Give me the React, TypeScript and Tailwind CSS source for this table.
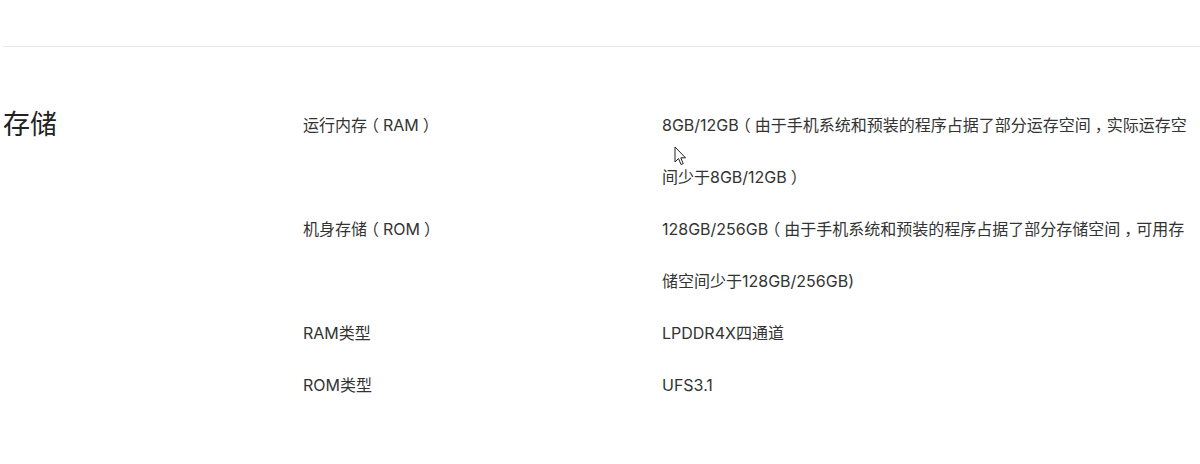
import React from 'react';

const specs = [
  {
    label: '运行内存（RAM）',
    value: '8GB/12GB（由于手机系统和预装的程序占据了部分运存空间，实际运存空间少于8GB/12GB）',
  },
  {
    label: '机身存储（ROM）',
    value: '128GB/256GB（由于手机系统和预装的程序占据了部分存储空间，可用存储空间少于128GB/256GB)',
  },
  { label: 'RAM类型', value: 'LPDDR4X四通道' },
  { label: 'ROM类型', value: 'UFS3.1' },
];

// fullwidth punctuation drawn centred in its cell, as in the source font
const Text: React.FC<{ children: string }> = ({ children }) => (
  <>
    {children.split(/([（），])/).map((part, i) =>
      /^[（），]$/.test(part) ? (
        <span key={i} className="inline-block w-[1em] text-center [font-feature-settings:'halt']">
          {part}
        </span>
      ) : (
        part
      )
    )}
  </>
);

const Cursor: React.FC = () => (
  <svg className="absolute left-[674px] top-[146px]" width="14" height="20" viewBox="0 0 14 20">
    <path d="M1 1 L1 16 L4.5 12.5 L7 18.5 L9.2 17.6 L6.8 11.8 L11.5 11.8 Z" fill="#fff" stroke="#222" strokeWidth="1" strokeLinejoin="round" />
  </svg>
);

export default function App() {
  return (
    <div
      className="relative w-[1200px] h-[464px] bg-white overflow-hidden pl-[3px]"
      style={{ fontFamily: 'Inter, "Noto Sans CJK SC", sans-serif' }}
    >
      <div className="h-[47px] border-b border-[#e8e8e8]" />
      <div className="flex pt-[52px]">
        <h2 className="w-[300px] shrink-0 text-[27px] leading-[52px] text-[#222]">存储</h2>
        <div className="flex flex-col">
          {specs.map(s => (
            <div key={s.label} className="flex text-[16px] leading-[52px] text-[#333]">
              <div className="w-[359px] shrink-0">
                <Text>{s.label}</Text>
              </div>
              <div className="w-[536px]">
                <Text>{s.value}</Text>
              </div>
            </div>
          ))}
        </div>
      </div>
      <Cursor />
    </div>
  );
}
